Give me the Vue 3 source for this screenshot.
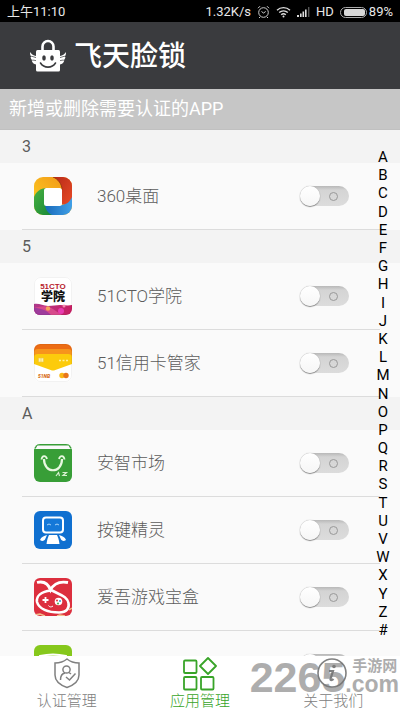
<script setup>
import { ref } from 'vue'

const sections = ref([
  {
    letter: '3',
    apps: [{ id: 'desk360', name: '360桌面', locked: false }]
  },
  {
    letter: '5',
    apps: [
      { id: 'cto', name: '51CTO学院', locked: false },
      { id: 'card', name: '51信用卡管家', locked: false }
    ]
  },
  {
    letter: 'A',
    apps: [
      { id: 'anzhi', name: '安智市场', locked: false },
      { id: 'anjian', name: '按键精灵', locked: false },
      { id: 'aiwu', name: '爱吾游戏宝盒', locked: false },
      { id: 'green', name: '', locked: false }
    ]
  }
])

const letters = 'ABCDEFGHIJKLMNOPQRSTUVWXYZ#'.split('')
const activeTab = ref('apps')
</script>

<template>
  <div class="page">
    <div class="status-bar">
      <span>上午11:10</span>
      <div class="status-right">
        <span>1.32K/s</span>
        <svg width="13" height="14" viewBox="0 0 13 14" fill="none" stroke="#ccc">
          <circle cx="6.5" cy="7.5" r="4.8" />
          <path d="M4.5 6.5l2 1.5 2.2-1.5M1 3.2L3 1.2M12 3.2L10 1.2M3 12l-1 1M10 12l1 1" />
        </svg>
        <svg width="15" height="12" viewBox="0 0 15 12" fill="none" stroke="#ddd" stroke-width="1.4">
          <path d="M1 4.2a9.4 9.4 0 0 1 13 0M3.2 6.6a6.2 6.2 0 0 1 8.6 0M5.2 8.8a3.4 3.4 0 0 1 4.6 0" />
          <circle cx="7.5" cy="10.4" r="1" fill="#ddd" stroke="none" />
        </svg>
        <svg width="13" height="10" viewBox="0 0 13 10">
          <path d="M0 8h2v2H0zM3 6.5h1.6V10H3zM5.5 4.5h1.6V10H5.5zM8 2.5h1.6V10H8z" fill="#ddd" />
          <path d="M11 0h1.4v10H11z" fill="#555" />
        </svg>
        <span>HD</span>
        <svg width="27" height="11" viewBox="0 0 27 11">
          <rect x="0.5" y="0.5" width="26" height="10" rx="5" fill="none" stroke="#aaa" />
          <rect x="4" y="2" width="21" height="7" rx="2" fill="#d8d8d8" />
        </svg>
        <span class="battery">89%</span>
      </div>
    </div>

    <header class="header">
      <svg class="logo" width="36" height="34" viewBox="0 0 36 34">
        <path d="M12.500 12V7.500a5.500 5.500 0 0 1 11 0V12" fill="none" stroke="#fff" stroke-width="2.600" />
        <rect x="6" y="11" width="24" height="21.500" rx="1.500" fill="#fff" />
        <path d="M0 13c0 3 .5 4 2 5-.8 0-1 0-1.500-.3.3 2.500 1.500 3.300 2.500 3.800l-1.300.1c.6 2.400 2 3.400 4.300 3.900V17C3.500 16.500 1.500 15.500 0 13z" fill="#fff" />
        <path d="M36 13c0 3-.5 4-2 5 .8 0 1 0 1.500-.3-.3 2.500-1.500 3.300-2.500 3.800l1.300.1c-.6 2.400-2 3.400-4.300 3.900V17c2.500-.5 4.500-1.500 6-4z" fill="#fff" />
        <path d="M1.500 17.200l4.500 1.400M2.500 21l3.500.6M34.500 17.200L30 18.600M33.500 21l-3.500.6" stroke="#3a3b3e" stroke-width=".7" />
        <ellipse cx="14" cy="19" rx="1.800" ry="2.800" fill="#3a3b3e" />
        <ellipse cx="22" cy="19" rx="1.800" ry="2.800" fill="#3a3b3e" />
        <path d="M10.500 24c3.500 5.500 11.500 5.500 15 0" fill="none" stroke="#3a3b3e" stroke-width="1.600" stroke-linecap="round" />
      </svg>
      <h1 class="title">飞天脸锁</h1>
    </header>

    <p class="banner">新增或删除需要认证的APP</p>

    <main class="list-area">
      <div class="list">
        <section v-for="section in sections" :key="section.letter">
          <h2 class="section-title">{{ section.letter }}</h2>
          <div v-for="app in section.apps" :key="app.id" class="row">
            <svg class="app-icon" width="38" height="38" viewBox="0 0 38 38">
              <defs>
                <clipPath :id="'clip-' + app.id">
                  <rect width="38" height="38" :rx="app.id === 'desk360' ? 9 : 6" />
                </clipPath>
                <linearGradient id="gradRed" x1="0" y1="0" x2="1" y2="1">
                  <stop offset="0" stop-color="#b52a18" />
                  <stop offset="1" stop-color="#ea4a26" />
                </linearGradient>
                <linearGradient id="gradYellow" x1="0" y1="1" x2="1" y2="0">
                  <stop offset="0" stop-color="#ffd420" />
                  <stop offset="1" stop-color="#f09018" />
                </linearGradient>
                <linearGradient id="gradBlue" x1="0" y1="0" x2="1" y2="0">
                  <stop offset="0" stop-color="#1768b8" />
                  <stop offset="1" stop-color="#40a0e8" />
                </linearGradient>
                <linearGradient id="gradGreen" x1="0" y1="0" x2="1" y2="1">
                  <stop offset="0" stop-color="#48b040" />
                  <stop offset="1" stop-color="#188838" />
                </linearGradient>
                <linearGradient id="gradWave" x1="0" y1="0" x2="1" y2="0">
                  <stop offset="0" stop-color="#b03a8c" />
                  <stop offset="1" stop-color="#c81e62" />
                </linearGradient>
              </defs>
              <g :clip-path="'url(#clip-' + app.id + ')'">
                <g v-if="app.id === 'desk360'">
                  <rect width="38" height="38" fill="url(#gradYellow)" />
                  <path d="M19 0h19v25l-3 4-7-2V13C28 7 24 2 19 0z" fill="url(#gradRed)" />
                  <path d="M38 20v18H14c-3-3-4-6-4-10h16c6 0 10-3 12-8z" fill="url(#gradBlue)" />
                  <path d="M0 20c2-5 6-9 13-9l-2 6v10c0 5 3 9 7 11H0z" fill="url(#gradGreen)" />
                  <path d="M19 0c5 2 9 7 9 13" fill="none" stroke="#8e3210" stroke-width=".8" />
                  <rect x="10" y="11" width="18" height="18" rx="2.500" fill="#fff" />
                </g>
                <g v-else-if="app.id === 'cto'">
                  <rect width="38" height="38" fill="#fff" />
                  <path d="M0 27c5-1 9 2 14 2s8-1 12-1 8 1 12 0v10H0z" fill="url(#gradWave)" />
                  <path d="M0 31c8-2 13-3 19 1 4 3 7 4 9 6H0z" fill="#d74a8c" />
                  <path d="M0 31c7 0 12 2 17 7H0z" fill="#9e3c9c" />
                  <circle cx="14" cy="31.500" r="2.200" fill="#f6a45a" />
                  <circle cx="27" cy="34" r="3" fill="#e83cb0" />
                  <circle cx="30" cy="29" r="1.500" fill="#f58ab0" />
                  <text x="19" y="12" class="cto-en">51CTO</text>
                  <text x="19" y="24" class="cto-cn">学院</text>
                </g>
                <g v-else-if="app.id === 'card'">
                  <rect width="38" height="38" fill="#fff" />
                  <path d="M0 0h38v18H0z" fill="#ec6c14" />
                  <path d="M0 8q0-3 4-3h30q4 0 4 3v12H0z" fill="#f7941c" />
                  <path d="M0 13q0-3 4-3h30q4 0 4 3v7L20 26.500h-2L0 20z" fill="#fccb0c" />
                  <path d="M4.500 14h5v4h-5zM7 14v4" fill="#fff3b0" stroke="#e8c64a" stroke-width=".6" />
                  <path d="M25 16.500h2M28.500 16.500h2M32 16.500h2" stroke="#fff0a0" stroke-width="1.400" />
                  <text x="4" y="34" class="nb">51NB</text>
                  <circle cx="28" cy="31.500" r="2.700" fill="#fbb818" />
                  <circle cx="32" cy="31.500" r="2.700" fill="#e8761c" />
                </g>
                <g v-else-if="app.id === 'anzhi'">
                  <rect width="38" height="38" fill="#389e37" />
                  <path d="M0 0h38v5H0z" fill="#fafafa" />
                  <path d="M3 .7h32M3 1L1 4.500M35 1l2 3.500" stroke="#389e37" stroke-width="1.400" fill="none" />
                  <path d="M10 15c0 15 18 15 18 0" fill="none" stroke="#e8f8e0" stroke-width="2.200" />
                  <path d="M7.500 15.500c.5-4.500 4.500-4.500 5.500-.5M25 15c1-4 5-4 5.500.5" fill="none" stroke="#e8f8e0" stroke-width="1.800" />
                  <path d="M22 32l2.500-3.500 1 3.500M28.500 28.500h4l-3.500 3h4" fill="none" stroke="#d8f0d0" stroke-width="1.200" />
                </g>
                <g v-else-if="app.id === 'anjian'">
                  <rect width="38" height="38" fill="#1070d0" />
                  <rect x="9" y="6.500" width="20" height="15" rx="3" fill="#1478d8" stroke="#fff" stroke-width="2" />
                  <path d="M13 14l2-1 2 1M21 14l2-1 2 1" fill="none" stroke="#a8d4fa" stroke-width="1" />
                  <path d="M15 24h8c1 2 2 5 2.500 9h-13c.5-4 1.500-7 2.500-9z" fill="#fff" />
                  <path d="M13 24c-3 1-6 2-7 5 2 1.500 4 1 5-.5zM25 24c3 1 6 2 7 5-2 1.500-4 1-5-.5z" fill="#fff" />
                </g>
                <g v-else-if="app.id === 'aiwu'">
                  <rect width="38" height="38" fill="#dc2f3e" />
                  <path d="M0 37l6-1 5 2M23 38l3-1 5 1M35 32l3-2" stroke="#f3c08c" stroke-width="1.500" fill="none" />
                  <path d="M3 4.500C9 3 14 5 16.500 12C20 5 26 3 34 4.500" fill="none" stroke="#fff" stroke-width="2.800" />
                  <path d="M17 12.500C7 13.500 2 18 3 24C5 31 14 34.500 25 34.500C33 34.500 35.500 30 34.500 25C33 18 26 17 18 12.500z" fill="none" stroke="#fff" stroke-width="2.600" />
                  <path d="M11.500 19v6M8.500 22h6" stroke="#fff" stroke-width="1.800" />
                  <circle cx="24.500" cy="23.500" r="3.800" fill="#fff" />
                  <circle cx="23" cy="22.500" r="1.100" fill="#e84848" />
                  <circle cx="26" cy="23" r="1.100" fill="#48a0d8" />
                  <circle cx="24" cy="25.500" r="1.100" fill="#58b058" />
                  <path d="M14.500 27.500c1 1.800 3 1.800 4.500.5" fill="none" stroke="#fff" />
                </g>
                <g v-else>
                  <rect width="38" height="38" fill="#86c81c" />
                  <path d="M6 11q13-3 26 0v20H6z" fill="#a8da50" stroke="#fff" stroke-width="2" />
                </g>
              </g>
              <rect
                v-if="app.id === 'cto' || app.id === 'card'"
                x="0.5" y="0.5" width="37" height="37" rx="6"
                fill="none" stroke="#000" stroke-opacity=".05"
              />
            </svg>
            <label class="app-name" :for="'lock-' + app.id">{{ app.name }}</label>
            <input :id="'lock-' + app.id" v-model="app.locked" class="switch" type="checkbox" role="switch">
          </div>
        </section>
      </div>

      <nav class="index-bar">
        <a v-for="letter in letters" :key="letter" href="#">{{ letter }}</a>
      </nav>
    </main>

    <footer class="tab-bar">
      <button class="tab" :class="{ active: activeTab === 'auth' }" @click="activeTab = 'auth'">
        <svg width="34" height="34" viewBox="0 0 34 34" fill="none" stroke="currentColor" stroke-width="1.500">
          <path d="M17 2c3 2.500 7 4 12 4v12c0 6-5 10-12 12.500C10 28 5 24 5 18V6c5 0 9-1.500 12-4z" />
          <circle cx="16.500" cy="12.500" r="3.600" />
          <path d="M10.500 23c0-4 1.500-6.500 4.500-7M19 15.500l2 1.500M16 20l3.500 3 6-6.500" />
        </svg>
        <span>认证管理</span>
      </button>
      <button class="tab" :class="{ active: activeTab === 'apps' }" @click="activeTab = 'apps'">
        <svg width="34" height="34" viewBox="0 0 34 34" fill="none" stroke="currentColor" stroke-width="1.800" stroke-linejoin="round">
          <rect x="1" y="3.500" width="12.500" height="12.500" rx="1" />
          <rect x="1" y="20" width="12.500" height="12.500" rx="1" />
          <rect x="18" y="20" width="12.500" height="12.500" rx="1" />
          <path d="M25 1l8 8-8 8-8-8z" />
        </svg>
        <span>应用管理</span>
      </button>
      <button class="tab" :class="{ active: activeTab === 'about' }" @click="activeTab = 'about'">
        <svg width="34" height="34" viewBox="0 0 34 34" fill="none" stroke="currentColor" stroke-width="1.600">
          <circle cx="16" cy="16" r="14" />
          <circle cx="18" cy="9.500" r="1.800" fill="currentColor" stroke="none" />
          <path d="M13 14h4l-2.500 8c-.3 1.500 1.500 1.500 3 0" stroke-width="2.200" />
        </svg>
        <span>关于我们</span>
      </button>
      <div class="watermark">
        <span class="mark-number">2265</span>
        <span class="mark-side">
          <span class="mark-cn">手游网</span>
          <span class="mark-com">.com</span>
        </span>
      </div>
    </footer>
  </div>
</template>

<style>
body {
  margin: 0;
}
</style>

<style scoped>
.page {
  display: flex;
  flex-direction: column;
  height: 100vh;
  background-color: #fafafa;
  font-family: Roboto, "Noto Sans CJK SC", sans-serif;
  color: #5c5c5c;
}

.status-bar {
  display: flex;
  justify-content: space-between;
  align-items: center;
  flex: none;
  height: 22px;
  padding: 2px 7px 0;
  box-sizing: border-box;
  background-color: #000;
  color: #e8e8e8;
  font-size: 13px;
  line-height: 20px;
}

.status-right {
  display: flex;
  align-items: center;
  gap: 6px;
}

.battery {
  margin-left: -4px;
}

.header {
  display: flex;
  align-items: center;
  flex: none;
  gap: 8px;
  height: 67px;
  padding: 0 30px;
  background-color: #3a3b3e;
}

.title {
  margin: 0;
  padding-top: 2px;
  color: #fff;
  font-size: 28px;
  font-weight: 500;
  line-height: 40px;
}

.banner {
  flex: none;
  margin: 0;
  padding: 0 9px;
  border-bottom: 1px solid #c0c0c0;
  background-color: #c6c6c6;
  color: #fff;
  font-size: 18px;
  line-height: 40px;
}

.list-area {
  position: relative;
  flex: 1;
  min-height: 0;
}

.list {
  height: 100%;
  overflow: hidden;
}

.section-title {
  margin: 0;
  padding: 0 22px;
  background-color: #f3f3f3;
  font-size: 16px;
  font-weight: 400;
  line-height: 33px;
}

.row {
  display: flex;
  align-items: center;
  height: 66px;
  margin: 0 20px 0 22px;
  padding: 0 31px 0 12px;
  border-bottom: 1px solid #dcdcdc;
}

.app-icon {
  flex: none;
}

.app-name {
  flex: 1;
  margin-left: 25px;
  font-size: 17px;
  font-weight: 300;
  line-height: 24px;
}

.cto-en {
  fill: #b81c2c;
  font-family: "Liberation Sans Narrow", "Liberation Sans", sans-serif;
  font-size: 8px;
  font-weight: 700;
  text-anchor: middle;
}

.cto-cn {
  fill: #111;
  font-size: 12px;
  font-weight: 900;
  text-anchor: middle;
}

.nb {
  fill: #d8701c;
  font-size: 5px;
  font-style: italic;
  font-weight: 900;
}

.switch {
  appearance: none;
  display: flex;
  align-items: center;
  justify-content: space-between;
  flex: none;
  width: 49px;
  height: 20px;
  margin: 0;
  border-radius: 10px;
  background: linear-gradient(#b8b8b8, #d4d4d4 20%, #dcdcdc);
  cursor: pointer;
}

.switch::before {
  content: "";
  width: 20px;
  height: 20px;
  border-radius: 50%;
  background: linear-gradient(#fff, #f6f6f6);
  box-shadow: 0 1px 1px #888, 0 0 1px #999;
}

.switch::after {
  content: "";
  width: 7px;
  height: 7px;
  margin-right: 11px;
  border: 1px solid #999;
  border-radius: 50%;
}

.switch:checked {
  flex-direction: row-reverse;
  background: #6cc04a;
}

.switch:checked::after {
  margin: 0 0 0 11px;
}

/* letters float over the right edge of the list */
.index-bar {
  position: absolute;
  top: 18px;
  right: 7px;
  bottom: 17px;
  display: flex;
  flex-direction: column;
  width: 20px;
}

.index-bar a {
  display: flex;
  align-items: center;
  justify-content: center;
  flex: 1;
  color: #000;
  font-size: 15px;
  line-height: 18px;
  text-decoration: none;
}

.tab-bar {
  position: relative;
  display: flex;
  flex: none;
  height: 55px;
  background-color: #fff;
}

.tab {
  display: flex;
  flex: 1;
  flex-direction: column;
  align-items: center;
  padding: 1px 0 0;
  border: none;
  background: none;
  color: #808080;
  font-family: inherit;
  font-size: 15px;
  font-weight: 300;
  line-height: 20px;
  cursor: pointer;
}

.tab.active {
  color: #38a428;
}

.watermark {
  position: absolute;
  right: 1px;
  bottom: 16px;
  display: flex;
  align-items: flex-end;
  color: #777;
  font-family: "Liberation Sans", "Noto Sans CJK SC", sans-serif;
  font-weight: 700;
  opacity: 0.6;
  pointer-events: none;
}

.mark-number {
  font-size: 43px;
  line-height: 36px;
}

.mark-side {
  display: flex;
  flex-direction: column;
}

.mark-cn {
  padding-left: 7px;
  font-size: 15px;
  line-height: 14px;
}

.mark-com {
  font-size: 23px;
  line-height: 22px;
}
</style>
